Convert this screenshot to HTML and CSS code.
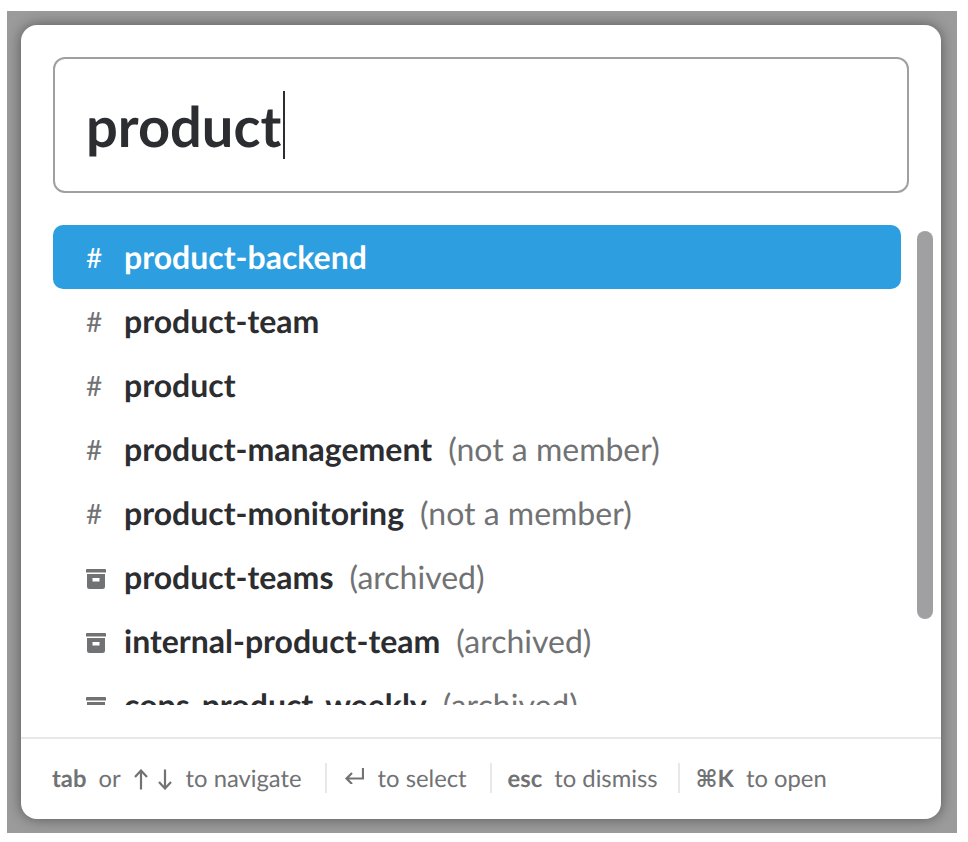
FILE: index.html
```html
<!DOCTYPE html>
<html lang="en">
<head>
    <meta charset="UTF-8">
    <meta name="viewport" content="width=device-width, initial-scale=1.0">
    <title>Quick switcher</title>
    <link rel="stylesheet" href="styles.css">
</head>
<body>

    <div class="backdrop">
        <div class="switcher">
            <!-- Search box -->
            <div class="search-box">
                <span class="search-text">product</span><span class="caret"></span>
            </div>

            <!-- Results -->
            <div class="results">
                <ul class="result-list">
                    <li class="result selected"><span class="result-icon">#</span><b>product-backend</b></li>
                    <li class="result"><span class="result-icon">#</span><b>product-team</b></li>
                    <li class="result"><span class="result-icon">#</span><b>product</b></li>
                    <li class="result"><span class="result-icon">#</span><b>product-management</b><span class="note">(not a member)</span></li>
                    <li class="result"><span class="result-icon">#</span><b>product-monitoring</b><span class="note">(not a member)</span></li>
                    <li class="result">
                        <span class="result-icon"><svg class="archive" viewBox="0 0 20 20"><path d="M1 0h18a1 1 0 0 1 1 1v2.500H0V1a1 1 0 0 1 1-1zM1 5h18v12.500a2.500 2.500 0 0 1-2.500 2.500h-13A2.500 2.500 0 0 1 1 17.500zM6.500 9v3.500h7V9z" fill-rule="evenodd"/></svg></span><b>product-teams</b><span class="note">(archived)</span>
                    </li>
                    <li class="result">
                        <span class="result-icon"><svg class="archive" viewBox="0 0 20 20"><path d="M1 0h18a1 1 0 0 1 1 1v2.500H0V1a1 1 0 0 1 1-1zM1 5h18v12.500a2.500 2.500 0 0 1-2.500 2.500h-13A2.500 2.500 0 0 1 1 17.500zM6.500 9v3.500h7V9z" fill-rule="evenodd"/></svg></span><b>internal-product-team</b><span class="note">(archived)</span>
                    </li>
                    <li class="result">
                        <span class="result-icon"><svg class="archive" viewBox="0 0 20 20"><path d="M1 0h18a1 1 0 0 1 1 1v2.500H0V1a1 1 0 0 1 1-1zM1 5h18v12.500a2.500 2.500 0 0 1-2.500 2.500h-13A2.500 2.500 0 0 1 1 17.500zM6.500 9v3.500h7V9z" fill-rule="evenodd"/></svg></span><b>cops-product-weekly</b><span class="note">(archived)</span>
                    </li>
                </ul>
                <div class="scrollbar"></div>
            </div>

            <!-- Keyboard hints -->
            <div class="hints">
                <div class="hint">
                    <b>tab</b><span>or</span>
                    <span class="arrows">
                        <svg class="arrow" viewBox="0 0 14 21"><path d="M7 20.500V2M1 8l6-6.500L13 8"/></svg>
                        <svg class="arrow" viewBox="0 0 14 21"><path d="M7 0.500V19M1 13l6 6.500L13 13"/></svg>
                    </span>
                    <span>to navigate</span>
                </div>
                <div class="hint">
                    <svg class="return" viewBox="0 0 19 16"><path d="M18 0v10.500H2M7 5l-5.500 5.500L7 16"/></svg>
                    <span>to select</span>
                </div>
                <div class="hint hint-esc">
                    <b>esc</b><span>to dismiss</span>
                </div>
                <div class="hint">
                    <b>⌘K</b><span>to open</span>
                </div>
            </div>
        </div>
    </div>

</body>
</html>
```

FILE: styles.css
```css
/* Page and dimmed backdrop */
body {
    margin: 0;
    background-color: #fff;
    font-family: "Lato", "DejaVu Sans", sans-serif;
    text-rendering: geometricPrecision;
}

.backdrop {
    width: 950px;
    height: 822px;
    margin: 11px 0 0 7px;
    padding: 14px;
    box-sizing: border-box;
    background-color: #9b9b9b;
    overflow: hidden;
}

/* Modal */
.switcher {
    display: flex;
    flex-direction: column;
    width: 920px;
    height: 794px;
    border-radius: 16px;
    background-color: #fff;
    box-shadow: 0 0 14px rgba(0, 0, 0, 0.45);
}

/* Search box */
.search-box {
    display: flex;
    align-items: center;
    height: 136px;
    margin: 32px 32px 0;
    padding-left: 31px;
    box-sizing: border-box;
    border: 2px solid #a0a0a2;
    border-radius: 12px;
}

.search-text {
    font-size: 56px;
    font-weight: 700;
    color: #2c2d30;
}

.caret {
    width: 2px;
    height: 68px;
    margin-left: 2px;
    background-color: #2c2d30;
}

/* Results */
.results {
    display: flex;
    gap: 16px;
    height: 480px;
    margin: 32px 8px 0 32px;
}

.result-list {
    flex: 1;
    margin: 0;
    padding: 0;
    list-style: none;
    overflow: hidden;
}

.result {
    display: flex;
    align-items: center;
    height: 64px;
    padding-left: 33px;
    border-radius: 10px;
    font-size: 32px;
    color: #717274;
}

.result b {
    margin-bottom: 2px;
    color: #2c2d30;
    font-weight: 700;
}

.result .note {
    margin-bottom: 2px;
    margin-left: 16px;
}

.result.selected {
    background-color: #2d9ee0;
    color: #fff;
}

.result.selected b {
    color: #fff;
}

.result-icon {
    display: flex;
    align-items: center;
    width: 38px;
    flex-shrink: 0;
    font-size: 28px;
}

.archive {
    width: 20px;
    height: 20px;
    margin-top: 4px;
    fill: #717274;
}

.scrollbar {
    width: 16px;
    height: 388px;
    margin-top: 6px;
    border-radius: 8px;
    background-color: #a0a0a2;
}

/* Keyboard hints */
.hints {
    display: flex;
    align-items: center;
    margin-top: 32px;
    height: 80px;
    padding-left: 31px;
    box-sizing: border-box;
    border-top: 2px solid #e8e8e8;
    font-size: 23.8px;
    color: #717274;
}

.hint {
    display: flex;
    align-items: center;
    gap: 12px;
    height: 30px;
    box-sizing: border-box;
    padding-top: 2px;
    padding-right: 23px;
    margin-right: 16px;
    border-right: 2px solid #e8e8e8;
}

.hint-esc {
    padding-right: 20px;
}

.hint:last-child {
    border-right: none;
}

.hint b {
    font-weight: 700;
}

.arrows {
    display: flex;
    gap: 10px;
    margin-top: 1px;
    margin-left: 1px;
    margin-right: 2px;
}

.arrow {
    width: 14px;
    height: 21px;
}

.return {
    width: 19px;
    height: 16px;
    margin-top: -6px;
    margin-left: 2px;
    margin-right: 2px;
}

.arrow path,
.return path {
    fill: none;
    stroke: #717274;
    stroke-width: 2.2;
}
```
